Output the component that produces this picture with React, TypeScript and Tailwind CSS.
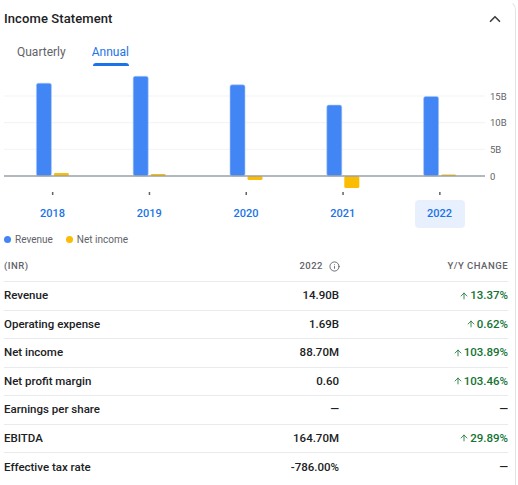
import { ChevronUp, Info, ArrowUp } from "lucide-react";

const years = [
  { year: "2018", revenue: 17.4, net: 0.55 },
  { year: "2019", revenue: 18.7, net: 0.38 },
  { year: "2020", revenue: 17.1, net: -0.75 },
  { year: "2021", revenue: 13.3, net: -2.25 },
  { year: "2022", revenue: 14.9, net: 0.09 },
];

const rows = [
  { label: "Revenue", value: "14.90B", change: "13.37%" },
  { label: "Operating expense", value: "1.69B", change: "0.62%" },
  { label: "Net income", value: "88.70M", change: "103.89%" },
  { label: "Net profit margin", value: "0.60", change: "103.46%" },
  { label: "Earnings per share", value: "—", change: null },
  { label: "EBITDA", value: "164.70M", change: "29.89%" },
  { label: "Effective tax rate", value: "-786.00%", change: null },
];

// chart geometry, in svg coords (svg top sits at page y=66)
const BASE = 109;
const PX_PER_B = 80 / 15;
const COL = 96.8;
const LEFT = 4;

const Chart = () => (
  <svg width={518} height={130} className="block">
    {[15, 10, 5].map((v) => (
      <g key={v}>
        <line
          x1={4}
          x2={485}
          y1={BASE - v * PX_PER_B}
          y2={BASE - v * PX_PER_B}
          stroke="#f1f3f4"
          strokeWidth={1}
        />
        <text
          x={490}
          y={BASE - v * PX_PER_B + 3.5}
          fontSize={9.5}
          fill="#5f6368"
          fontFamily="Roboto, sans-serif"
        >
          {v}B
        </text>
      </g>
    ))}
    {years.map((y, i) => {
      const cx = LEFT + COL * i + COL / 2;
      const rh = y.revenue * PX_PER_B;
      const nh = Math.max(Math.abs(y.net) * PX_PER_B, 1.5);
      return (
        <g key={y.year}>
          <rect
            x={cx - 16}
            y={BASE - rh}
            width={15}
            height={rh}
            rx={2}
            fill="#4285f4"
            stroke="#a8c7fa"
            strokeWidth={0.6}
          />
          <rect
            x={cx + 1.5}
            y={y.net >= 0 ? BASE - nh : BASE}
            width={15}
            height={nh}
            rx={1.5}
            fill="#fbbc04"
          />
          <rect x={cx - 0.5} y={125} width={1.5} height={3} fill="#5f6368" />
        </g>
      );
    })}
    <line x1={4} x2={485} y1={BASE} y2={BASE} stroke="#9aa0a6" strokeWidth={1.5} />
    <text x={490} y={BASE + 3.5} fontSize={9.5} fill="#5f6368" fontFamily="Roboto, sans-serif">
      0
    </text>
  </svg>
);

export default function App() {
  return (
    <div className="h-[485px] w-[516px] overflow-hidden rounded-tr-[10px] border-r border-t border-[#e3e3e3] border-t-transparent bg-white font-['Roboto',sans-serif] text-[#202124]">
      <div className="flex h-[36px] items-center justify-between pl-1 pr-[11px]">
        <span className="text-[13px] font-medium tracking-[0.1px] text-[#202124]">Income Statement</span>
        <ChevronUp size={18} strokeWidth={2.2} className="text-[#3c4043]" />
      </div>

      <div className="flex h-[30px] gap-[26px] pl-[17px] text-[12px]">
        <div className="flex items-center text-[#5f6368]">Quarterly</div>
        <div className="relative flex items-center text-[#1a73e8]">
          Annual
          <div className="absolute bottom-[1px] left-[1px] right-0 h-[3px] rounded-t-[3px] bg-[#1a73e8]" />
        </div>
      </div>

      <Chart />

      <div className="ml-1 grid w-[484px] grid-cols-5 pt-[3px]">
        {years.map((y) => (
          <div key={y.year} className="flex justify-center">
            <div
              className={
                y.year === "2022"
                  ? "flex h-[28px] w-[50px] items-center justify-center rounded-[4px] bg-[#e8f0fe] text-[11px] font-medium text-[#1a73e8]"
                  : "flex h-[28px] w-[50px] items-center justify-center text-[11px] font-medium text-[#1a73e8]"
              }
            >
              {y.year}
            </div>
          </div>
        ))}
      </div>

      <div className="flex h-[22px] items-center gap-[13px] pl-[4px] text-[10px] text-[#5f6368]">
        <div className="flex items-center gap-[4px]">
          <span className="h-[7px] w-[7px] rounded-full bg-[#4285f4]" />
          Revenue
        </div>
        <div className="flex items-center gap-[4px]">
          <span className="h-[7px] w-[7px] rounded-full bg-[#fbbc04]" />
          Net income
        </div>
      </div>

      <div className="ml-1 mt-[1px] w-[504px]">
        <div className="flex h-[31px] items-center border-b border-[#e8eaed] text-[9.5px] font-medium tracking-[0.5px] text-[#5f6368]">
          <div className="flex-1">(INR)</div>
          <div className="flex w-[150px] items-center justify-end gap-[6px]">
            2022
            <Info size={11} strokeWidth={2} />
          </div>
          <div className="w-[168px] text-right">Y/Y CHANGE</div>
        </div>
        {rows.map((r, i) => (
          <div
            key={r.label}
            className={
              i === rows.length - 1
                ? "flex h-[28.5px] items-center text-[11.5px] font-medium"
                : "flex h-[28.5px] items-center border-b border-[#e8eaed] text-[11.5px] font-medium"
            }
          >
            <div className="flex-1">{r.label}</div>
            <div className="w-[150px] pr-[1px] text-right">{r.value}</div>
            <div className="flex w-[168px] items-center justify-end">
              {r.change ? (
                <span className="flex items-center gap-[1px] text-[#137333]">
                  <ArrowUp size={10} strokeWidth={2} />
                  {r.change}
                </span>
              ) : (
                <span>—</span>
              )}
            </div>
          </div>
        ))}
      </div>
    </div>
  );
}
